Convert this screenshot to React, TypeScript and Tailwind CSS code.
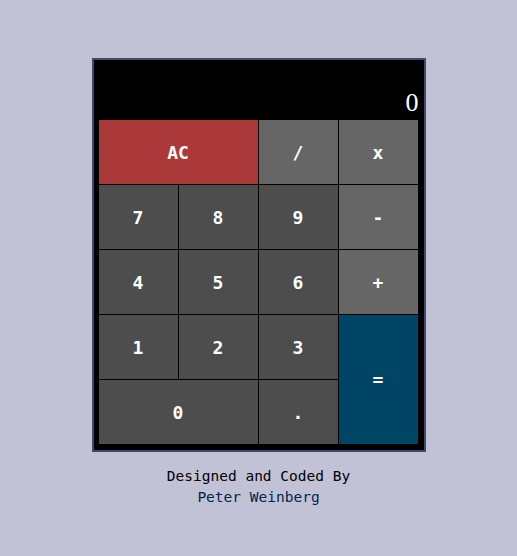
import React, { useState } from 'react';

const mono = "font-['DejaVu_Sans_Mono','Liberation_Mono',monospace]";

type Key = { id: string; label: string; cls: string };

const keys: Key[] = [
  { id: 'clear', label: 'AC', cls: 'col-span-2 bg-[#ac3939]' },
  { id: 'divide', label: '/', cls: 'bg-[#666666]' },
  { id: 'multiply', label: 'x', cls: 'bg-[#666666]' },
  { id: 'seven', label: '7', cls: 'bg-[#4d4d4d]' },
  { id: 'eight', label: '8', cls: 'bg-[#4d4d4d]' },
  { id: 'nine', label: '9', cls: 'bg-[#4d4d4d]' },
  { id: 'subtract', label: '-', cls: 'bg-[#666666]' },
  { id: 'four', label: '4', cls: 'bg-[#4d4d4d]' },
  { id: 'five', label: '5', cls: 'bg-[#4d4d4d]' },
  { id: 'six', label: '6', cls: 'bg-[#4d4d4d]' },
  { id: 'add', label: '+', cls: 'bg-[#666666]' },
  { id: 'one', label: '1', cls: 'bg-[#4d4d4d]' },
  { id: 'two', label: '2', cls: 'bg-[#4d4d4d]' },
  { id: 'three', label: '3', cls: 'bg-[#4d4d4d]' },
  { id: 'equals', label: '=', cls: 'row-span-2 bg-[#004466]' },
  { id: 'zero', label: '0', cls: 'col-span-2 bg-[#4d4d4d]' },
  { id: 'decimal', label: '.', cls: 'bg-[#4d4d4d]' },
];

export default function App() {
  const [output] = useState('0');
  const [formula] = useState('');

  return (
    <div className="min-h-[556px] bg-[#c2c2d6] pt-[58px]">
      <div className="mx-auto w-[334px] border-2 border-[#47476b] bg-black px-[5px] pt-[5px] pb-[6px]">
        {/* display */}
        <div className={`h-[20px] text-right text-[20px] leading-[20px] text-orange-400 ${mono}`}>{formula}</div>
        <div className="h-[35px] text-right font-['Liberation_Serif',serif] text-[26px] leading-[35px] text-white">
          {output}
        </div>

        <div className="grid w-[319px] grid-cols-[repeat(4,79px)] grid-rows-[repeat(5,64px)] gap-px bg-black">
          {keys.map((k) => (
            <button
              key={k.id}
              id={k.id}
              className={`${k.cls} flex items-center justify-center text-[18px] font-bold text-white ${mono}`}
            >
              {k.label}
            </button>
          ))}
        </div>
      </div>

      <div className={`mt-[14px] text-center text-[14.5px] leading-[21px] text-black ${mono}`}>
        Designed and Coded By
        <br />
        <span className="text-[#00264d]">Peter Weinberg</span>
      </div>
    </div>
  );
}
